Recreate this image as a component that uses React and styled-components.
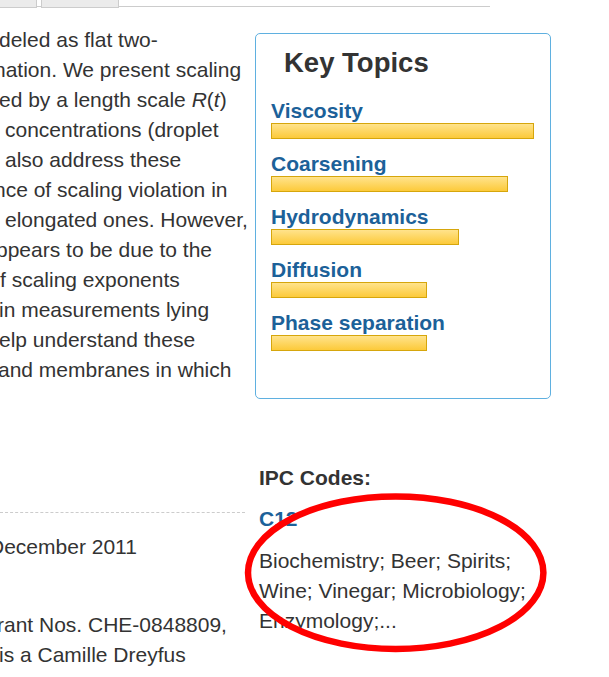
import React from 'react';
import styled, { createGlobalStyle } from 'styled-components';

const GlobalStyle = createGlobalStyle`
  body {
    margin: 0;
    background: #fff;
    color: #333;
    font-family: "Liberation Sans", Arial, sans-serif;
  }
`;

// abstract lines, cut off at the left edge of the window
const abstractLines = [
  { text: 'deled as flat two-', shift: -1 },
  { text: 'nation. We present scaling', shift: -6 },
  { text: 'ed by a length scale ', shift: -1, tail: true },
  { text: 'concentrations (droplet', shift: 5 },
  { text: 'also address these', shift: 5 },
  { text: 'nce of scaling violation in', shift: -6 },
  { text: 'elongated ones. However,', shift: 5 },
  { text: 'ppears to be due to the', shift: -4 },
  { text: 'f scaling exponents', shift: 0 },
  { text: 'in measurements lying', shift: -1 },
  { text: 'elp understand these', shift: -1 },
  { text: 'and membranes in which', shift: -2 },
];

const topics = [
  { name: 'Viscosity', width: 263 },
  { name: 'Coarsening', width: 237 },
  { name: 'Hydrodynamics', width: 188 },
  { name: 'Diffusion', width: 156 },
  { name: 'Phase separation', width: 156 },
];

class App extends React.Component {
  render() {
    return (
      <Page>
        <GlobalStyle />
        <TabBar>
          <Tab $width={47} />
          <Tab $width={78} />
        </TabBar>
        <Columns>
          <Main>
            <Abstract>
              {abstractLines.map((l, i) => (
                <Line key={i} $shift={l.shift}>
                  {l.text}
                  {l.tail && (
                    <>
                      <i>R</i>(<i>t</i>)
                    </>
                  )}
                </Line>
              ))}
            </Abstract>
            <Meta>
              <Line $shift={-11}>December 2011</Line>
              <Funding>
                <Line $shift={-3}>rant Nos. CHE-0848809,</Line>
                <Line $shift={-1}>is a Camille Dreyfus</Line>
              </Funding>
            </Meta>
          </Main>
          <Sidebar>
            <TopicBox>
              <BoxTitle>Key Topics</BoxTitle>
              <TopicList>
                {topics.map((t) => (
                  <TopicItem key={t.name}>
                    <TopicLink href="#">{t.name}</TopicLink>
                    <Bar $width={t.width} />
                  </TopicItem>
                ))}
              </TopicList>
            </TopicBox>
            <Ipc>
              <IpcTitle>IPC Codes:</IpcTitle>
              <IpcCode href="#">C12</IpcCode>
              <IpcText>Biochemistry; Beer; Spirits; Wine; Vinegar; Microbiology; Enzymology;...</IpcText>
            </Ipc>
          </Sidebar>
        </Columns>
        <Marker width="609" height="677" viewBox="0 0 609 677">
          <ellipse cx="395.7" cy="572.7" rx="147.7" ry="76.3" fill="none" stroke="#ff0000" strokeWidth="6.5" />
        </Marker>
      </Page>
    );
  }
}

//Style
const Page = styled.div`
  position: relative;
  width: 609px;
  height: 677px;
  overflow: hidden;
`;

const TabBar = styled.div`
  display: flex;
  align-items: flex-start;
  gap: 4px;
  width: 500px;
  height: 7px;
  box-sizing: border-box;
  border-bottom: 1px solid #ccc;
  margin-left: -10px;
`;

const Tab = styled.div`
  flex: none;
  width: ${(p) => p.$width}px;
  height: 8px;
  box-sizing: border-box;
  background: #ebebeb;
  border: 1px solid #ccc;
  border-top: none;
`;

const Columns = styled.div`
  display: flex;
  gap: 10px;
  align-items: flex-start;
`;

const Main = styled.div`
  width: 245px;
  flex: none;
  padding-top: 18px;
  font-size: 21px;
  line-height: 30px;
`;

const Abstract = styled.p`
  margin: 0;
`;

const Line = styled.span`
  display: block;
  white-space: pre;
  margin-left: ${(p) => p.$shift}px;
`;

const Meta = styled.div`
  margin-top: 127px;
  border-top: 1px dashed #ccc;
  padding-top: 19px;
`;

const Funding = styled.div`
  margin-top: 48px;
`;

const Sidebar = styled.div`
  width: 296px;
  flex: none;
  margin-top: 26px;
`;

const TopicBox = styled.div`
  border: 1px solid #5fb0e0;
  border-radius: 5px;
  padding: 14px 15px 47px 15px;
`;

const BoxTitle = styled.h3`
  margin: 0 0 21px 13px;
  font-size: 27.5px;
  line-height: 30px;
  font-weight: bold;
  color: #333;
`;

const TopicList = styled.div`
  display: flex;
  flex-direction: column;
  gap: 13px;
`;

const TopicItem = styled.div`
  display: flex;
  flex-direction: column;
  align-items: flex-start;
`;

const TopicLink = styled.a`
  font-size: 21px;
  line-height: 24px;
  font-weight: bold;
  color: #1c6199;
  text-decoration: none;
`;

const Bar = styled.div`
  width: ${(p) => p.$width}px;
  height: 16px;
  box-sizing: border-box;
  border: 1px solid #d6a60c;
  background: linear-gradient(to bottom, #ffe38c, #fcca3a);
`;

const Ipc = styled.div`
  margin-top: 64px;
  padding-left: 4px;
  font-size: 21px;
  line-height: 30px;
`;

const IpcTitle = styled.div`
  font-weight: bold;
  color: #333;
  margin-bottom: 11px;
`;

const IpcCode = styled.a`
  display: block;
  font-weight: bold;
  color: #1c6199;
  text-decoration: none;
  margin-bottom: 12px;
`;

const IpcText = styled.div`
  color: #333;
`;

const Marker = styled.svg`
  position: absolute;
  left: 0;
  top: 0;
  pointer-events: none;
`;

export default App;
